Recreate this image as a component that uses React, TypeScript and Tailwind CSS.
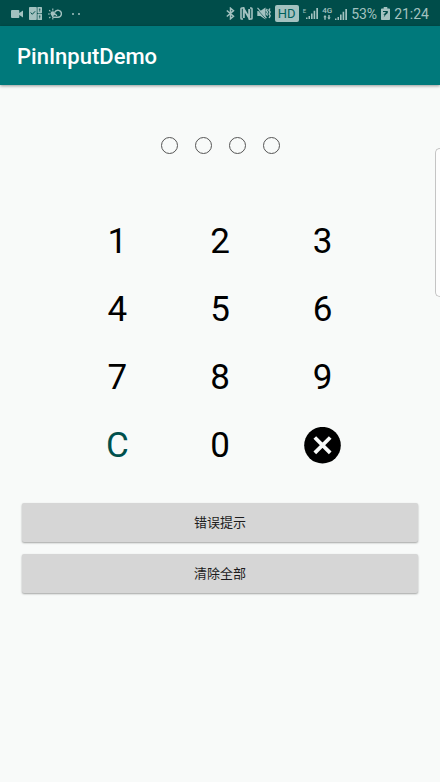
import { useState } from "react";

const DIGITS = ["1", "2", "3", "4", "5", "6", "7", "8", "9"];
const PIN_LENGTH = 4;

function CameraIcon() {
  return (
    <svg width="12" height="8" viewBox="0 0 12 8" fill="currentColor" aria-hidden="true">
      <path d="M1 0h6.500a.8.8 0 0 1 .8.8v6.400a.8.8 0 0 1-.8.8H1a1 1 0 0 1-1-1V1a1 1 0 0 1 1-1zM8.300 3 12 .4v7.200L8.300 5z" />
    </svg>
  );
}

function BriefingIcon() {
  return (
    <svg width="13" height="13" viewBox="0 0 13 13" aria-hidden="true">
      <rect x="0" y="0" width="7.800" height="13" rx=".8" fill="currentColor" />
      <rect x="8.400" y="0" width="4.600" height="6.200" rx=".6" fill="currentColor" />
      <rect x="8.400" y="6.800" width="4.600" height="6.200" rx=".6" fill="currentColor" />
      <path d="m1.700 5.500 1.600 1.800 2.800-3" fill="none" stroke="#004d4a" strokeWidth="1" />
      <path d="M10.700 1.500v3.200M10.700 8.300v3.200" fill="none" stroke="#004d4a" strokeWidth=".7" />
      <path d="M9.900 2.300h1.600M9.900 9.300h1.600" fill="none" stroke="#004d4a" strokeWidth=".5" />
    </svg>
  );
}

function WeatherIcon() {
  return (
    <svg width="14" height="12" viewBox="0 0 14 12" fill="none" stroke="currentColor" aria-hidden="true">
      <circle cx="4.800" cy="5.600" r="2.300" fill="currentColor" stroke="none" />
      <path d="M0 6h1.800M1.200 2.200l1.200 1.200M1.200 10l1.200-1.200M4.800.6v1.800M4.800 9.800v1.700" strokeWidth="1.100" />
      <path d="M5.600 9.300h4.400a3.500 3.500 0 1 0-3.300-4.900M5.600 9.300a1.700 1.700 0 0 1 .2-3.300c1.500-.2 2.800.8 2.800 2" strokeWidth="1.400" />
    </svg>
  );
}

function BluetoothIcon() {
  return (
    <svg width="10" height="13" viewBox="0 0 10 13" fill="none" stroke="currentColor" strokeWidth="1.500" aria-hidden="true">
      <path d="m.8 3.500 6.700 5.800-3 2.500V1.200l3 2.500L.8 9.500" />
    </svg>
  );
}

function NfcIcon() {
  return (
    <svg width="13" height="13" viewBox="0 0 13 13" fill="none" stroke="currentColor" aria-hidden="true">
      <path d="M4.500 1H1.800a.8.8 0 0 0-.8.800v9.400c0 .5.300.8.800.8H3M8.500 12h2.700c.5 0 .8-.300.8-.8V1.800a.8.8 0 0 0-.8-.8H10" strokeWidth="1.600" />
      <path d="M3.800 11V2l5.400 9V2" strokeWidth="2" />
    </svg>
  );
}

function MuteIcon() {
  return (
    <svg width="14" height="13" viewBox="0 0 14 13" fill="none" stroke="currentColor" aria-hidden="true">
      <path d="M.3 4h3L8.500.6v11.800L3.300 9h-3z" fill="currentColor" stroke="none" />
      <path d="m-.3 1.600 9 10.200" stroke="#004d4a" strokeWidth=".8" />
      <path d="m.5.8 9 10.400" strokeWidth="1.200" />
      <path d="m10.300 2-1 1.500 1.300 1.600L9.500 7l1.100 1.600M12.900 1.500l-1 1.800 1.300 1.700-1.100 1.900 1.100 1.800-1.100 2.300" strokeWidth="1.400" />
    </svg>
  );
}

function SignalIcon() {
  return (
    <svg width="12" height="11" viewBox="0 0 12 11" fill="currentColor" aria-hidden="true">
      <path d="M0 9.500h1.500V11H0zM2.500 8H4v3H2.500zM5 5.500h1.600V11H5zM7.600 2.800h1.600V11H7.600zM10.300 0H12v11h-1.700z" />
    </svg>
  );
}

function DataArrowsIcon() {
  return (
    <svg width="8" height="5" viewBox="0 0 8 5" fill="currentColor" aria-hidden="true">
      <path d="M2 0 3.700 2.200H2.700v2.600H1.300V2.200H.3zM6 4.800 4.300 2.600h1V0h1.400v2.600h1z" />
    </svg>
  );
}

function BatteryIcon() {
  return (
    <svg width="9" height="13" viewBox="0 0 9 13" aria-hidden="true">
      <path d="M2.700 0h3.600v1.400h1.900c.4 0 .8.400.8.800v10c0 .4-.4.800-.8.800H.8a.8.800 0 0 1-.8-.8v-10c0-.4.4-.8.800-.8h1.900z" fill="currentColor" />
      <path d="M2 4h4.800v2L5 7.500 2.600 10.500 3.600 7.800H2.300L5 5H2z" fill="#004d4a" />
    </svg>
  );
}

function StatusBar() {
  return (
    <div className="flex h-[26px] items-center justify-between bg-[#004d4a] px-[11px] pt-px text-sm leading-4 text-[#a3c2c0]">
      <div className="flex items-center gap-[6px]">
        <CameraIcon />
        <BriefingIcon />
        <WeatherIcon />
        <div className="flex gap-1 pl-1">
          <span className="size-[2px] rounded-full bg-current" />
          <span className="size-[2px] rounded-full bg-current" />
        </div>
      </div>
      <div className="flex items-center gap-1">
        <BluetoothIcon />
        <NfcIcon />
        <MuteIcon />
        <span className="flex h-[17px] w-6 items-center justify-center rounded-[2px] bg-[#a3c2c0] text-[13px] text-[#00605c]">
          HD
        </span>
        <div className="flex items-end">
          <span className="self-start text-[6px] leading-[6px]">E</span>
          <SignalIcon />
        </div>
        <div className="flex items-end gap-[3px]">
          <div className="flex flex-col items-center gap-px">
            <span className="text-[8px] leading-[7px] font-medium">4G</span>
            <DataArrowsIcon />
          </div>
          <SignalIcon />
        </div>
        <span>53%</span>
        <BatteryIcon />
        <span>21:24</span>
      </div>
    </div>
  );
}

function DeleteIcon() {
  return (
    <svg width="38" height="38" viewBox="0 0 38 38" aria-hidden="true">
      <circle cx="18.500" cy="18.200" r="18.300" fill="#000" />
      <path d="m10.800 10.500 15.400 15.400m0-15.400-15.400 15.400" stroke="#f8faf9" strokeWidth="3.800" fill="none" />
    </svg>
  );
}

export default function App() {
  const [pin, setPin] = useState("");
  const [error, setError] = useState(false);

  const press = (digit: string) => {
    setError(false);
    setPin((value) => (value.length < PIN_LENGTH ? value + digit : value));
  };
  const clear = () => {
    setError(false);
    setPin("");
  };

  const keyClass = "flex h-[68px] items-center justify-center text-[35px] leading-[42px]";
  const actionClass =
    "h-[39px] w-full rounded-[2px] bg-[#d6d6d6] text-[13px] leading-5 text-[#1c1c1c] shadow-[0_1px_2px_rgba(0,0,0,0.35)]";

  return (
    <div className="relative min-h-screen bg-[#f8faf9] font-['Roboto','Noto_Sans_CJK_SC',sans-serif] text-black">
      <StatusBar />
      <header className="flex h-[59px] items-center bg-[#00797b] px-[17px] pt-[2px] shadow-[0_1px_3px_rgba(0,0,0,0.4)]">
        <h1 className="text-[22px] leading-7 font-medium text-white">PinInputDemo</h1>
      </header>
      <main className="pt-[52px]">
        <div className="flex justify-center gap-[17px]">
          {Array.from({ length: PIN_LENGTH }, (_, i) => (
            <span
              key={i}
              className={
                "size-[17px] rounded-full border " +
                (error ? "border-red-600 " : "border-[#555555] ") +
                (i < pin.length ? "bg-[#555555]" : "")
              }
            />
          ))}
        </div>
        <div className="mt-[54px] grid grid-cols-3 px-[66px]">
          {DIGITS.map((digit) => (
            <button key={digit} type="button" className={keyClass} onClick={() => press(digit)}>
              {digit}
            </button>
          ))}
          <button type="button" className={keyClass + " text-[#00504d]"} onClick={clear}>
            C
          </button>
          <button type="button" className={keyClass} onClick={() => press("0")}>
            0
          </button>
          <button type="button" aria-label="Delete" className={keyClass} onClick={() => setPin(pin.slice(0, -1))}>
            <DeleteIcon />
          </button>
        </div>
        <div className="mt-[23px] flex flex-col gap-3 px-[22px]">
          <button type="button" className={actionClass} onClick={() => setError(true)}>
            错误提示
          </button>
          <button type="button" className={actionClass} onClick={clear}>
            清除全部
          </button>
        </div>
      </main>
      <div className="absolute top-[148px] right-0 h-[149px] w-[5px] rounded-l-[5px] border border-r-0 border-[#c4c4c4] bg-[#fdfdfd]" />
    </div>
  );
}
